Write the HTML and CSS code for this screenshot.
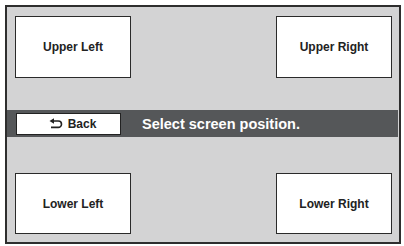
FILE: index.html
```html
<!DOCTYPE html>
<html>
<head>
<meta charset="utf-8">
<link rel="stylesheet" href="styles.css">
</head>
<body>
<div class="frame">
  <div class="row row-top">
    <div class="box">Upper Left</div>
    <div class="box">Upper Right</div>
  </div>
  <div class="bar">
    <div class="back">
      <svg class="icon" width="14" height="10" viewBox="0 0 14 10">
        <path d="M4.5 2 H9.3 A3.2 3.2 0 0 1 9.3 8.4 H2" fill="none" stroke="#222" stroke-width="1.6"/>
        <path d="M0.5 2 L5 -0.8 L5 4.8 Z" fill="#222"/>
      </svg>
      <span>Back</span>
    </div>
    <div class="msg">Select screen position.</div>
  </div>
  <div class="row row-bottom">
    <div class="box">Lower Left</div>
    <div class="box">Lower Right</div>
  </div>
</div>
</body>
</html>
```
FILE: styles.css
```css
html, body {
  margin: 0;
  padding: 0;
  background: #ffffff;
}
body {
  font-family: "Liberation Sans", Arial, sans-serif;
  font-weight: bold;
  color: #222;
}
.frame {
  margin: 5px 0 0 5px;
  width: 392px;
  height: 235px;
  border: 2px solid #2e2e2e;
  background: #d3d3d4;
  display: flex;
  flex-direction: column;
}
.row {
  display: flex;
  justify-content: space-between;
  padding: 0 7px 0 8px;
}
.row-top {
  padding-top: 9px;
  height: 62px;
}
.row-bottom {
  margin-top: 36px;
  height: 61px;
}
.box {
  width: 114px;
  border: 1px solid #2a2a2a;
  background: #ffffff;
  display: flex;
  align-items: center;
  justify-content: center;
  font-size: 12px;
}
.bar {
  margin-top: 32px;
  height: 27px;
  margin-right: 1px;
  background: #555759;
  display: flex;
  align-items: center;
  padding-left: 9px;
}
.back {
  height: 20px;
  width: 95px;
  padding-left: 8px;
  border: 1px solid #222;
  background: #ffffff;
  display: flex;
  align-items: center;
  justify-content: center;
  font-size: 12px;
  gap: 5px;
}
.icon {
  display: block;
  overflow: visible;
}
.msg {
  margin-left: 21px;
  color: #ffffff;
  font-size: 14.5px;
}
```
